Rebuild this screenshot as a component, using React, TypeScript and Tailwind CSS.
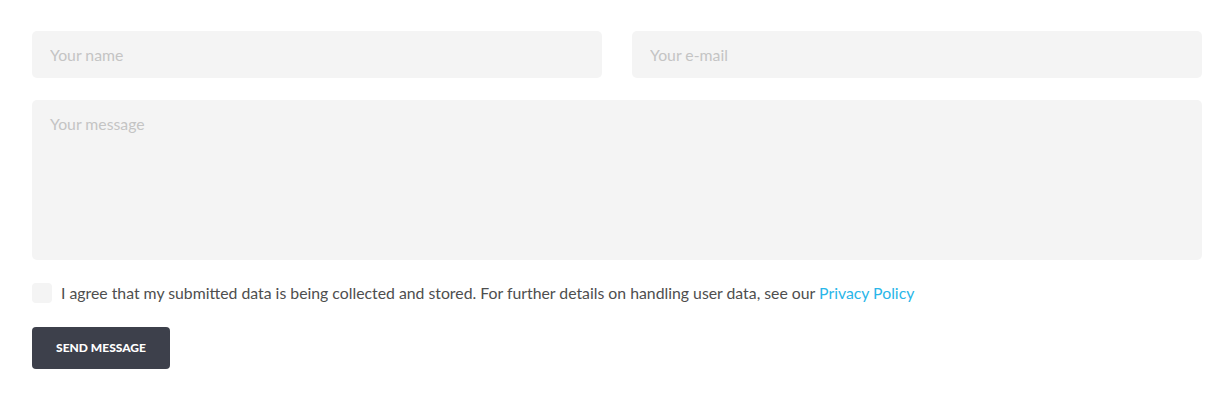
import React from "react";

const App = () => {
  return (
    <div className="w-[1232px] h-[400px] bg-white pl-8 pr-[30px] pt-[31px] font-['Lato',sans-serif]">
      <form className="flex flex-col">
        <div className="flex gap-[30px]">
          <input
            type="text"
            placeholder="Your name"
            className="w-full h-[47px] rounded-[5px] bg-[#f4f4f4] px-[18px] text-[15.8px] text-[#555] placeholder:text-[#c4c4c4] outline-none"
          />
          <input
            type="email"
            placeholder="Your e-mail"
            className="w-full h-[47px] rounded-[5px] bg-[#f4f4f4] px-[18px] text-[15.8px] text-[#555] placeholder:text-[#c4c4c4] outline-none"
          />
        </div>
        <textarea
          placeholder="Your message"
          className="mt-[22px] h-[160px] w-full resize-none rounded-[5px] bg-[#f4f4f4] px-[18px] py-[13px] text-[15.8px] leading-[22px] text-[#555] placeholder:text-[#c4c4c4] outline-none"
        />
        <label className="mt-[23px] flex items-center gap-[9px] text-[15.8px] leading-[20px] text-[#4e4e4e]">
          <span className="w-[20px] h-[20px] rounded-[4px] bg-[#f4f4f4] shrink-0"></span>
          <span>
            I agree that my submitted data is being collected and stored. For
            further details on handling user data, see our{" "}
            <a className="text-[#29b6e9]">Privacy Policy</a>
          </span>
        </label>
        <div className="mt-[24px]">
          <button
            type="button"
            className="h-[42px] w-[138px] rounded-[4px] bg-[#3d404b] text-[12px] font-black uppercase text-white"
          >
            Send message
          </button>
        </div>
      </form>
    </div>
  );
};

export default App;
